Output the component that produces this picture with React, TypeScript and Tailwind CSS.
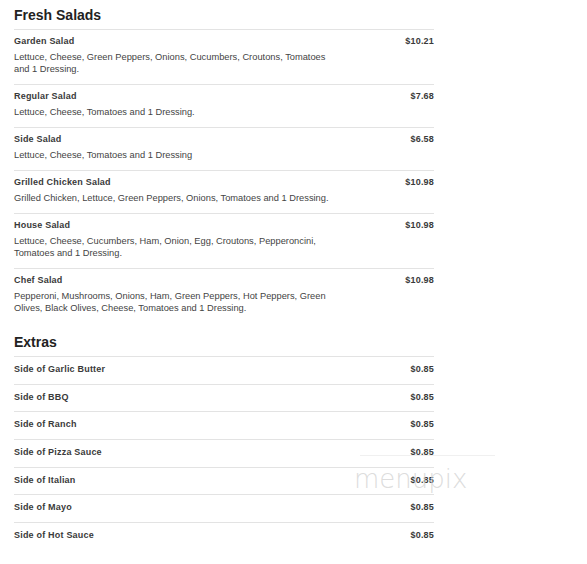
const salads = [
  {
    name: 'Garden Salad',
    price: '$10.21',
    desc: 'Lettuce, Cheese, Green Peppers, Onions, Cucumbers, Croutons, Tomatoes and 1 Dressing.',
  },
  { name: 'Regular Salad', price: '$7.68', desc: 'Lettuce, Cheese, Tomatoes and 1 Dressing.' },
  { name: 'Side Salad', price: '$6.58', desc: 'Lettuce, Cheese, Tomatoes and 1 Dressing' },
  {
    name: 'Grilled Chicken Salad',
    price: '$10.98',
    desc: 'Grilled Chicken, Lettuce, Green Peppers, Onions, Tomatoes and 1 Dressing.',
  },
  {
    name: 'House Salad',
    price: '$10.98',
    desc: 'Lettuce, Cheese, Cucumbers, Ham, Onion, Egg, Croutons, Pepperoncini, Tomatoes and 1 Dressing.',
  },
  {
    name: 'Chef Salad',
    price: '$10.98',
    desc: 'Pepperoni, Mushrooms, Onions, Ham, Green Peppers, Hot Peppers, Green Olives, Black Olives, Cheese, Tomatoes and 1 Dressing.',
  },
];

const extras = [
  'Side of Garlic Butter',
  'Side of BBQ',
  'Side of Ranch',
  'Side of Pizza Sauce',
  'Side of Italian',
  'Side of Mayo',
  'Side of Hot Sauce',
];

export default function App() {
  return (
    <div className="relative w-[587px] h-[564px] bg-white overflow-hidden font-['Liberation_Sans',Arial,sans-serif]">
      <div className="w-[420px] ml-[14px] pt-[7px]">
        <h2 className="text-[14px] leading-[16px] font-bold text-[#222] mb-[6px]">Fresh Salads</h2>
        {salads.map((s) => (
          <div key={s.name} className="flex justify-between pt-[6px] pb-[9px] border-t border-[#e3e3e3]">
            <div>
              <div className="text-[9px] leading-[11px] font-bold tracking-[0.2px] text-[#3a3a3a]">{s.name}</div>
              <p className="mt-[4px] w-[318px] text-[9.3px] leading-[12px] text-[#444]">{s.desc}</p>
            </div>
            <div className="text-[9px] leading-[11px] font-bold tracking-[0.2px] text-[#3a3a3a]">{s.price}</div>
          </div>
        ))}
        <h2 className="mt-[11px] text-[14px] leading-[16px] font-bold text-[#222] mb-[6px]">Extras</h2>
        {extras.map((e) => (
          <div key={e} className="flex justify-between pt-[7px] pb-[8.7px] border-t border-[#e3e3e3]">
            <div className="text-[9px] leading-[11px] font-bold tracking-[0.2px] text-[#3a3a3a]">{e}</div>
            <div className="text-[9px] leading-[11px] font-bold tracking-[0.2px] text-[#3a3a3a]">$0.85</div>
          </div>
        ))}
      </div>
      {/* watermark */}
      <div className="absolute left-[360px] top-[455px] w-[135px] border-t border-[#f0f0f0]" />
      <div className="absolute left-[354px] top-[464px] text-[26px] leading-[30px] text-[#d4d4d4]/80 font-['DejaVu_Sans',sans-serif] font-extralight">
        menupix
      </div>
    </div>
  );
}
